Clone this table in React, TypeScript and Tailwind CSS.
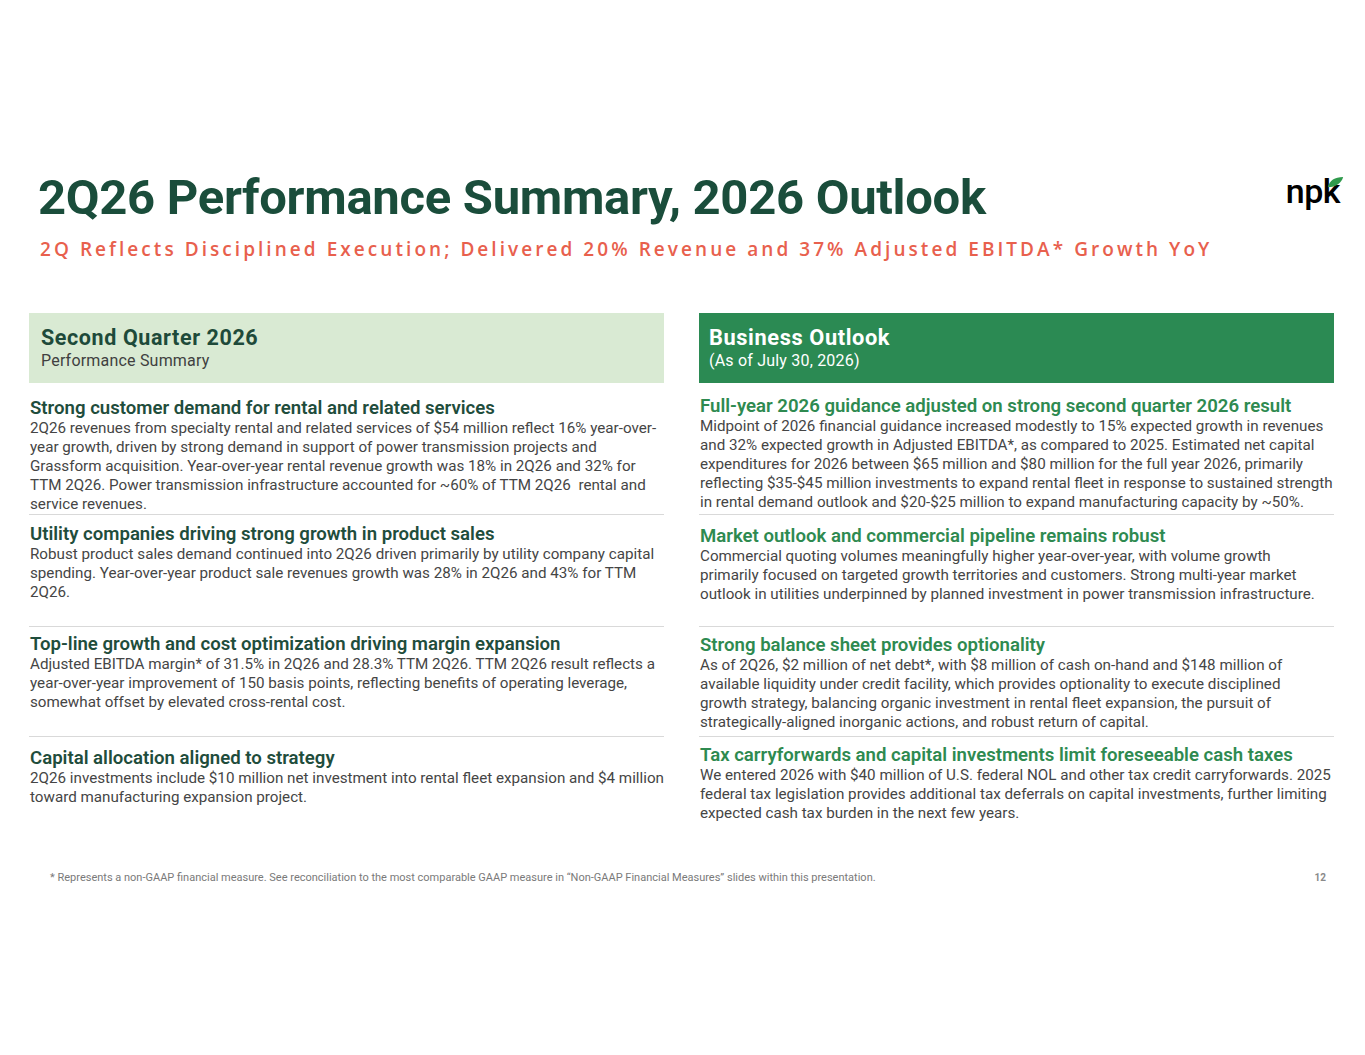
import React from "react";

type Item = {
  title: string;
  body: string;
  height: string;
  top: string;
  right?: string;
};

const leftItems: Item[] = [
  {
    title: "Strong customer demand for rental and related services",
    body: "2Q26 revenues from specialty rental and related services of $54 million reflect 16% year-over-year growth, driven by strong demand in support of power transmission projects and Grassform acquisition. Year-over-year rental revenue growth was 18% in 2Q26 and 32% for TTM 2Q26. Power transmission infrastructure accounted for ~60% of TTM 2Q26  rental and service revenues.",
    height: "h-[132px]",
    top: "pt-[15px]",
  },
  {
    title: "Utility companies driving strong growth in product sales",
    body: "Robust product sales demand continued into 2Q26 driven primarily by utility company capital spending. Year-over-year product sale revenues growth was 28% in 2Q26 and 43% for TTM 2Q26.",
    height: "h-[112px]",
    top: "pt-[9px]",
  },
  {
    title: "Top-line growth and cost optimization driving margin expansion",
    body: "Adjusted EBITDA margin* of 31.5% in 2Q26 and 28.3% TTM 2Q26. TTM 2Q26 result reflects a year-over-year improvement of 150 basis points, reflecting benefits of operating leverage, somewhat offset by elevated cross-rental cost.",
    height: "h-[110px]",
    top: "pt-[7px]",
  },
  {
    title: "Capital allocation aligned to strategy",
    body: "2Q26 investments include $10 million net investment into rental fleet expansion and $4 million toward manufacturing expansion project.",
    height: "h-[90px]",
    top: "pt-[11px]",
  },
];

const rightItems: Item[] = [
  {
    title: "Full-year 2026 guidance adjusted on strong second quarter 2026 result",
    body: "Midpoint of 2026 financial guidance increased modestly to 15% expected growth in revenues and 32% expected growth in Adjusted EBITDA*, as compared to 2025. Estimated net capital expenditures for 2026 between $65 million and $80 million for the full year 2026, primarily reflecting $35-$45 million investments to expand rental fleet in response to sustained strength in rental demand outlook and $20-$25 million to expand manufacturing capacity by ~50%.",
    height: "h-[132px]",
    top: "pt-[13px]",
  },
  {
    title: "Market outlook and commercial pipeline remains robust",
    body: "Commercial quoting volumes meaningfully higher year-over-year, with volume growth primarily focused on targeted growth territories and customers. Strong multi-year market outlook in utilities underpinned by planned investment in power transmission infrastructure.",
    height: "h-[112px]",
    top: "pt-[11px]",
    right: "pr-[5px]",
  },
  {
    title: "Strong balance sheet provides optionality",
    body: "As of 2Q26, $2 million of net debt*, with $8 million of cash on-hand and $148 million of available liquidity under credit facility, which provides optionality to execute disciplined growth strategy, balancing organic investment in rental fleet expansion, the pursuit of strategically-aligned inorganic actions, and robust return of capital.",
    height: "h-[110px]",
    top: "pt-[8px]",
    right: "pr-[5px]",
  },
  {
    title: "Tax carryforwards and capital investments limit foreseeable cash taxes",
    body: "We entered 2026 with $40 million of U.S. federal NOL and other tax credit carryforwards. 2025 federal tax legislation provides additional tax deferrals on capital investments, further limiting expected cash tax burden in the next few years.",
    height: "h-[90px]",
    top: "pt-[8px]",
  },
];

function Section({ item, accent, last }: { item: Item; accent: string; last: boolean }) {
  return (
    <div className={`${item.height} ${item.top} ${last ? "" : "border-b border-[#d9d9d9]"} pl-px`}>
      <h3 className={`text-[18.6px] font-semibold leading-[21px] ${accent}`}>{item.title}</h3>
      <p className={`${item.right ?? ""} text-[15.2px] leading-[19px] text-[#454545] whitespace-pre-wrap`}>
        {item.body}
      </p>
    </div>
  );
}

function NpkLogo() {
  return (
    <div className="relative mt-[6px] mr-[25px]">
      <span className="text-[34px] font-medium leading-none tracking-[-0.5px] text-black font-['Roboto',sans-serif]">
        npk
      </span>
      <svg viewBox="0 0 20 14" className="absolute right-[-4px] top-[2px] h-[12px] w-[17px]">
        <path d="M1 13 C3 5 9 1 19 1 C17 8 11 13 1 13 Z" fill="#2f9a4c" />
      </svg>
    </div>
  );
}

export default function App() {
  return (
    <div className="w-[1365px] h-[1055px] bg-white font-['Roboto',sans-serif]">
      <div className="flex items-start justify-between pt-[168px] pl-[38px]">
        <h1 className="text-[49px] font-bold leading-[60px] tracking-[-0.3px] text-[#1a4d3b]">
          2Q26 Performance Summary, 2026 Outlook
        </h1>
        <NpkLogo />
      </div>
      <p className="mt-[8px] pl-[40px] text-[19px] font-semibold leading-[26px] tracking-[3.05px] text-[#e8604d] font-['Open_Sans',sans-serif]">
        2Q Reflects Disciplined Execution; Delivered 20% Revenue and 37% Adjusted EBITDA* Growth YoY
      </p>

      <div className="mt-[51px] grid grid-cols-2 gap-[35px] pl-[29px] pr-[31px]">
        <div>
          <div className="h-[70px] bg-[#d9ead3] px-[12px] pt-[11px]">
            <h2 className="text-[21.5px] font-bold leading-[27px] tracking-[0.6px] text-[#1e4a3a]">Second Quarter 2026</h2>
            <p className="text-[16px] leading-[20px] tracking-[0.2px] text-[#404040]">Performance Summary</p>
          </div>
          {leftItems.map((item, i) => (
            <Section key={item.title} item={item} accent="text-[#1f4d3c]" last={i === leftItems.length - 1} />
          ))}
        </div>
        <div>
          <div className="h-[70px] bg-[#2b8a53] px-[10px] pt-[11px]">
            <h2 className="text-[21.8px] font-bold leading-[27px] tracking-[0.6px] text-white">Business Outlook</h2>
            <p className="text-[16px] leading-[20px] tracking-[0.2px] text-white">(As of July 30, 2026)</p>
          </div>
          {rightItems.map((item, i) => (
            <Section key={item.title} item={item} accent="text-[#2e8a50]" last={i === rightItems.length - 1} />
          ))}
        </div>
      </div>

      <div className="mt-[44px] flex items-center justify-between pl-[50px] pr-[39px]">
        <p className="text-[11px] leading-[14px] text-[#7a7a7a]">
          * Represents a non-GAAP financial measure. See reconciliation to the most comparable GAAP measure in “Non-GAAP Financial Measures” slides within this presentation.
        </p>
        <span className="text-[10px] font-bold leading-[14px] text-[#8a8a8a]">12</span>
      </div>
    </div>
  );
}
